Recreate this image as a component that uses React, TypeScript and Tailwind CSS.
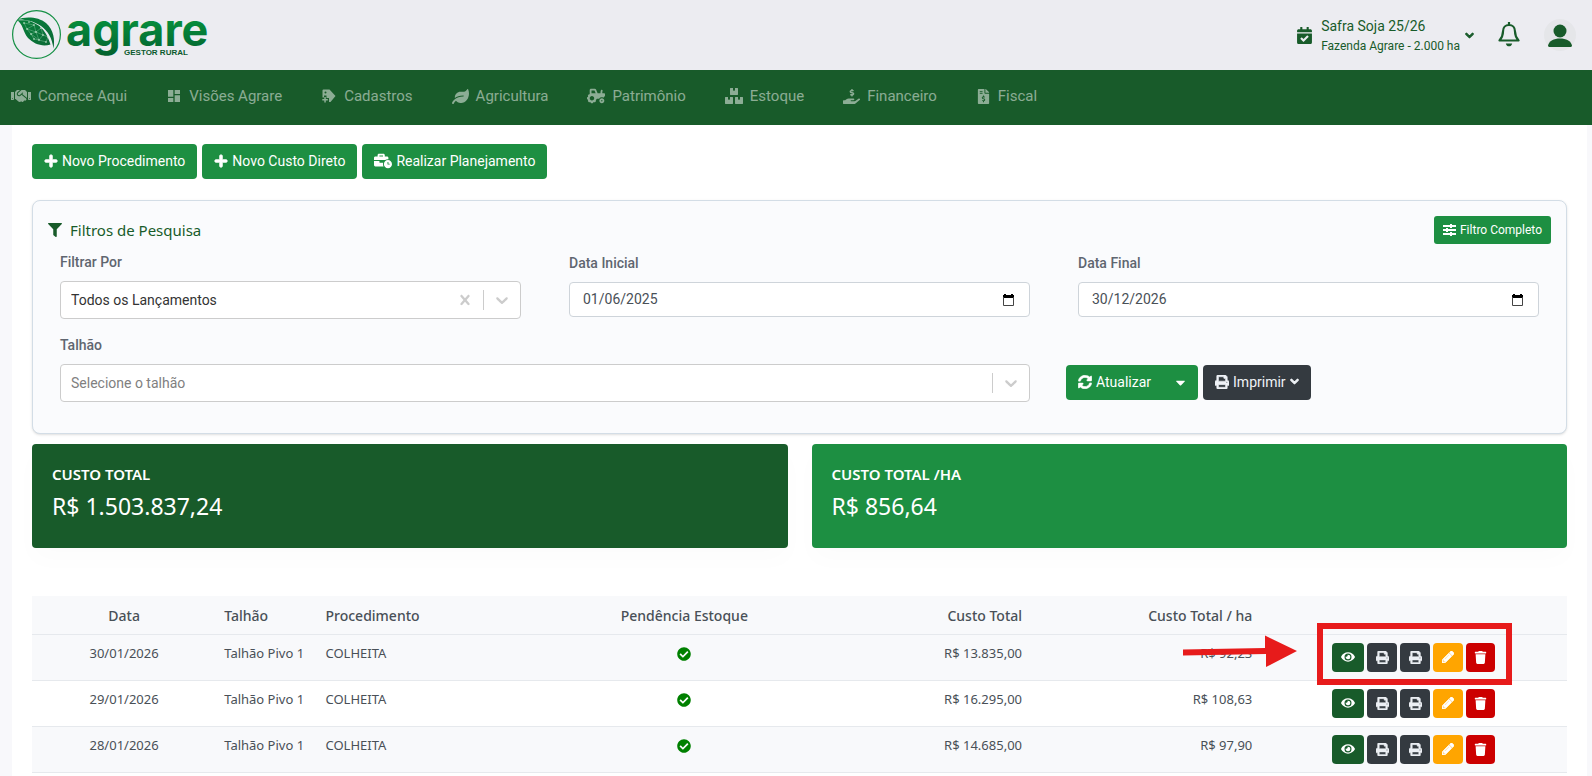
import React from "react";
import {
  FaHandshake, FaLeaf, FaTractor, FaBoxes, FaHandHoldingUsd, FaFileInvoiceDollar, FaPlus, FaBusinessTime,
  FaFilter, FaSyncAlt, FaPrint, FaChevronDown, FaCaretDown, FaCheckCircle, FaEye, FaTrash, FaPencilAlt, FaCalendarCheck,
} from "react-icons/fa";
import { MdDashboard } from "react-icons/md";

function TagPlusIcon() {
  return (
    <svg width="16" height="16" viewBox="0 0 16 16" fill="currentColor" aria-hidden="true">
      <path fillRule="evenodd" d="M1.500 2.500Q1.500 1.500 2.500 1.500H8.500L14.500 8L9.500 14H8V10H5.500V7.500H3V9.500H1.500ZM4.500 3.500a1 1 0 1 0 0 2a1 1 0 1 0 0-2z" />
      <path d="M3.300 9h1.500v2h2v1.500h-2v2H3.300v-2H1.300V11h2z" />
    </svg>
  );
}

const navItems = [
  { label: "Comece Aqui", icon: <FaHandshake size={20} /> },
  { label: "Visões Agrare", icon: <MdDashboard size={16} /> },
  { label: "Cadastros", icon: <TagPlusIcon /> },
  { label: "Agricultura", icon: <FaLeaf size={17} /> },
  { label: "Patrimônio", icon: <FaTractor size={18} /> },
  { label: "Estoque", icon: <FaBoxes size={18} /> },
  { label: "Financeiro", icon: <FaHandHoldingUsd size={17} /> },
  { label: "Fiscal", icon: <FaFileInvoiceDollar size={15} /> },
];

const rows = [
  { date: "30/01/2026", field: "Talhão Pivo 1", proc: "COLHEITA", total: "R$ 13.835,00", perHa: "R$ 92,23" },
  { date: "29/01/2026", field: "Talhão Pivo 1", proc: "COLHEITA", total: "R$ 16.295,00", perHa: "R$ 108,63" },
  { date: "28/01/2026", field: "Talhão Pivo 1", proc: "COLHEITA", total: "R$ 14.685,00", perHa: "R$ 97,90" },
];

const leafNodes = [[12, 19], [17, 18], [15, 25], [22, 21], [19, 30], [24, 28], [29, 24], [27, 36], [31, 31], [36, 33], [34, 38], [22, 35]];

function Logo() {
  return (
    <svg width="204" height="62" viewBox="0 0 204 62" className="overflow-visible" role="img" aria-label="agrare gestor rural">
      <defs>
        <linearGradient id="brand" x1="0" y1="0" x2="0" y2="1">
          <stop offset="0.2" stopColor="#07963f" />
          <stop offset="1" stopColor="#03602e" />
        </linearGradient>
        <linearGradient id="leaf" x1="0" y1="0" x2="1" y2="1">
          <stop offset="0" stopColor="#07803a" />
          <stop offset="1" stopColor="#0c6a37" />
        </linearGradient>
      </defs>
      <circle cx="24.500" cy="30.500" r="23.900" fill="none" stroke="#159045" strokeWidth="1.200" />
      <path d="M5 16C9 17 13 15 20 18C30 22 35 29 38.500 40.500C30 43 22 40 16 34C11 28 11 20 5 16Z" fill="url(#leaf)" />
      <path d="M5 15.500C14 12 27 13 34 19C42 26 43 36 41.500 44.500C40 34 36 27 29 22C22 17 13 15 5 15.500Z" fill="url(#leaf)" />
      <path d="M12 19L22 21L15 25L24 28L29 24L31 31L24 28L19 30L27 36L31 31L36 33L34 38L27 36L22 35L19 30L15 25L12 19M22 21L24 28L27 36" fill="none" stroke="#8fcfa6" strokeWidth="0.400" />
      {leafNodes.map(([x, y]) => <circle key={x + "-" + y} cx={x} cy={y} r="0.800" fill="#d6f0de" />)}
      <text x="54" y="42" fontSize="45" fontWeight="700" className="font-['Inter',sans-serif]" fill="url(#brand)">agrare</text>
      <text x="112" y="51" fontSize="8" fontWeight="700" className="font-['Liberation_Sans',sans-serif]" fill="#0b5a2e">GESTOR RURAL</text>
    </svg>
  );
}

function SelectChevron() {
  return (
    <svg width="20" height="20" viewBox="0 0 20 20" fill="currentColor" aria-hidden="true">
      <path d="M4.516 7.548c0.436-0.446 1.043-0.481 1.576 0l3.908 3.747 3.908-3.747c0.533-0.481 1.141-0.446 1.574 0 0.436 0.445 0.408 1.197 0 1.615-0.406 0.418-4.695 4.502-4.695 4.502-0.217 0.223-0.502 0.335-0.787 0.335s-0.570-0.112-0.789-0.335c0 0-4.287-4.084-4.695-4.502s-0.436-1.170 0-1.615z" />
    </svg>
  );
}

function SelectClear() {
  return (
    <svg width="20" height="20" viewBox="0 0 20 20" fill="currentColor" aria-hidden="true">
      <path d="M14.348 14.849c-0.469 0.469-1.229 0.469-1.697 0l-2.651-3.030-2.651 3.029c-0.469 0.469-1.229 0.469-1.697 0-0.469-0.469-0.469-1.229 0-1.697l2.758-3.150-2.759-3.152c-0.469-0.469-0.469-1.228 0-1.697s1.228-0.469 1.697 0l2.652 3.031 2.651-3.031c0.469-0.469 1.228-0.469 1.697 0s0.469 1.229 0 1.697l-2.758 3.152 2.758 3.150c0.469 0.469 0.469 1.229 0 1.698z" />
    </svg>
  );
}

function SelectField(props: { id: string; label: string; value: string; clearable?: boolean; muted?: boolean }) {
  return (
    <div>
      <label htmlFor={props.id} className="block text-sm leading-5 font-medium text-[#5f6670]">{props.label}</label>
      <div className="mt-[9px] flex h-[38px] items-center rounded border border-[#cccccc] bg-white text-[#cccccc]">
        <select
          id={props.id}
          className={props.muted
            ? "h-full min-w-0 flex-1 appearance-none bg-transparent px-2.5 text-sm text-[#808080] outline-none"
            : "h-full min-w-0 flex-1 appearance-none bg-transparent px-2.5 text-sm text-[#333333] outline-none"}
        >
          <option>{props.value}</option>
        </select>
        {props.clearable && <button type="button" aria-label="Limpar" className="p-2"><SelectClear /></button>}
        <span className="h-5 w-px bg-[#cccccc]" />
        <span className="p-2"><SelectChevron /></span>
      </div>
    </div>
  );
}

function DateField(props: { id: string; label: string; value: string }) {
  return (
    <div className="pt-px">
      <label htmlFor={props.id} className="block text-sm leading-5 font-medium text-[#5f6670]">{props.label}</label>
      <div className="mt-[9px] flex h-[35px] items-center rounded border border-[#ced4da] bg-white pr-3.5">
        <input id={props.id} defaultValue={props.value} className="h-full min-w-0 flex-1 bg-transparent px-[13px] pb-0.5 text-sm text-[#495057] tabular-nums outline-none" />
        <button type="button" aria-label="Abrir calendário" className="text-black">
          <svg width="13" height="14" viewBox="0 0 13 14" aria-hidden="true">
            <path d="M1 2h1V1h2v1h5V1h2v1h1v3H1z" fill="currentColor" />
            <path d="M1.500 4v8.500h10V4" fill="none" stroke="#444444" />
          </svg>
        </button>
      </div>
    </div>
  );
}

const greenButton = "flex h-[35px] items-center gap-1 rounded bg-[#1d8f42] px-3 pb-0.5 text-sm text-white";
const darkAction = "flex h-[29px] w-[30px] items-center justify-center rounded bg-[#343a40] text-[#eceff4]";

export default function App() {
  return (
    <div className="flex h-screen flex-col overflow-hidden bg-[#f8f8fb] font-['Roboto',sans-serif] text-[#495057]">
      <header className="flex h-[70px] shrink-0 items-center justify-between bg-[#ececf1] pr-4 pl-3 text-[#185b2a]">
        <a href="#inicio" aria-label="Agrare"><Logo /></a>
        <div className="flex items-center">
          <button type="button" className="flex items-center text-left">
            <FaCalendarCheck size={17} />
            <span className="ml-2 flex flex-col pt-0.5">
              <span className="text-sm leading-[19px]">Safra Soja 25/26</span>
              <span className="text-xs leading-5">Fazenda Agrare - 2.000 ha</span>
            </span>
            <FaChevronDown size={9} strokeWidth={60} className="ml-[5px]" />
          </button>
          <button type="button" aria-label="Notificações" className="ml-6">
            <svg width="22" height="26" viewBox="0 0 22 26" fill="none" stroke="currentColor" strokeWidth="2.200" aria-hidden="true">
              <path d="M11 0v3M1.500 18.500c2.500-3 3.500-5 3.500-9C5 5.500 7.500 3 11 3s6 2.500 6 6.500c0 4 1 6 3.500 9z" strokeLinejoin="round" />
              <path d="M7.800 21.500h6.400c-.5 2-1.700 2.800-3.200 2.800s-2.700-.8-3.200-2.800z" fill="currentColor" stroke="none" />
            </svg>
          </button>
          <button type="button" aria-label="Perfil" className="ml-6 flex size-8 items-center justify-center rounded-full bg-[#e5e6e9]">
            <svg width="24" height="24" viewBox="0 0 24 24" fill="currentColor" aria-hidden="true">
              <circle cx="12" cy="8" r="6.500" />
              <path d="M0 22.500C1 18 6 15.500 12 15.500S23 18 24 22.500c0 1-1 1.500-2 1.500H2c-1 0-2-.5-2-1.500z" />
            </svg>
          </button>
        </div>
      </header>

      <nav className="flex h-[55px] shrink-0 items-center gap-[39px] bg-[#185b2a] pb-[3px] pl-[11px] text-[15px] text-white/50">
        {navItems.map((item) => (
          <a key={item.label} href="#menu" className="flex items-center gap-[7px]">
            {item.icon}
            <span>{item.label}</span>
          </a>
        ))}
      </nav>

      <main className="mr-[5px] ml-3 flex-1 bg-white px-5 pt-[19px]">
        <div className="flex gap-[5px]">
          <button type="button" className={greenButton}><FaPlus size={14} strokeWidth={30} />Novo Procedimento</button>
          <button type="button" className={greenButton}><FaPlus size={14} strokeWidth={30} />Novo Custo Direto</button>
          <button type="button" className={greenButton}><FaBusinessTime size={18} />Realizar Planejamento</button>
        </div>

        <section className="mt-[21px] h-[234px] rounded-lg border border-[#d3dde6] bg-[#fafbfd] px-[15px] pt-[15px] shadow-sm">
          <div className="flex h-7 items-center justify-between">
            <h2 className="flex items-center gap-2 font-['Noto_Sans',sans-serif] text-[15px] text-[#185b2a]">
              <FaFilter size={14} />Filtros de Pesquisa
            </h2>
            <button type="button" className="flex h-7 items-center gap-1 rounded-[3px] bg-[#1d8f42] px-[9px] text-xs text-white">
              <svg width="13" height="12" viewBox="0 0 13 12" fill="none" stroke="currentColor" strokeWidth="2" aria-hidden="true">
                <path d="M0 2h13M0 6h13M0 10h13" /><path d="M8 0v4M4 4v4M8 8v4" />
              </svg>
              Filtro Completo
            </button>
          </div>
          <div className="mt-2 grid grid-cols-3 gap-x-12 gap-y-4 px-3">
            <SelectField id="tipo" label="Filtrar Por" value="Todos os Lançamentos" clearable />
            <DateField id="inicio" label="Data Inicial" value="01/06/2025" />
            <DateField id="fim" label="Data Final" value="30/12/2026" />
            <div className="col-span-2"><SelectField id="talhao" label="Talhão" value="Selecione o talhão" muted /></div>
            <div className="-ml-3 flex items-end gap-[5px] pb-0.5">
              <div className="flex">
                <button type="button" className="flex h-[35px] items-center gap-1 rounded-l bg-[#1d8f42] px-3 pb-0.5 text-sm text-white"><FaSyncAlt size={14} strokeWidth={20} />Atualizar</button>
                <button type="button" aria-label="Mais opções" className="flex h-[35px] items-center rounded-r bg-[#1d8f42] px-2.5 text-white"><FaCaretDown size={15} /></button>
              </div>
              <button type="button" className="flex h-[35px] items-center gap-1 rounded bg-[#343a40] px-3 pb-0.5 text-sm text-[#eff2f7]"><FaPrint size={14} strokeWidth={20} />Imprimir<FaChevronDown size={9} strokeWidth={60} /></button>
            </div>
          </div>
        </section>

        <section className="mt-2.5 grid grid-cols-2 gap-6 font-['Noto_Sans',sans-serif] text-white">
          <div className="h-[104px] rounded bg-[#185b2a] px-5 pt-5 shadow-[0_12px_24px_rgba(18,38,63,0.015)]">
            <h3 className="text-[15px] leading-5 font-semibold">CUSTO TOTAL</h3>
            <p className="mt-2 text-[23px] leading-7">R$ 1.503.837,24</p>
          </div>
          <div className="h-[104px] rounded bg-[#1d8f42] px-5 pt-5 shadow-[0_12px_24px_rgba(18,38,63,0.015)]">
            <h3 className="text-[15px] leading-5 font-semibold">CUSTO TOTAL /HA</h3>
            <p className="mt-2 text-[23px] leading-7">R$ 856,64</p>
          </div>
        </section>

        <div className="relative mt-12">
          <table className="w-full table-fixed border-collapse font-['Noto_Sans',sans-serif] text-[13px]">
            <colgroup>
              <col className="w-[12%]" /><col className="w-[6.600%]" /><col className="w-[17%]" /><col className="w-[13.800%]" /><col className="w-[15.100%]" /><col className="w-[15%]" /><col />
            </colgroup>
            <thead>
              <tr className="h-[38px] border-b border-[#e6e9ed] bg-[#f8f9fb] text-sm">
                <th className="pt-0.5 font-medium">Data</th>
                <th className="pt-0.5 pl-2 text-left font-medium">Talhão</th>
                <th className="pt-0.5 pl-2 text-left font-medium">Procedimento</th>
                <th className="pt-0.5 font-medium">Pendência Estoque</th>
                <th className="pt-0.5 text-right font-medium">Custo Total</th>
                <th className="pt-0.5 text-right font-medium">Custo Total / ha</th>
                <th aria-label="Ações" />
              </tr>
            </thead>
            <tbody>
              {rows.map((row) => (
                <tr key={row.date} className="h-[46px] border-b border-[#e6e9ed] odd:bg-[#f8f9fb]">
                  <td className="pb-1.5 text-center">{row.date}</td>
                  <td className="pb-1.5 pl-2 whitespace-nowrap">{row.field}</td>
                  <td className="pb-1.5 pl-2">{row.proc}</td>
                  <td className="pb-1.5"><FaCheckCircle size={14} className="mx-auto text-[#008000]" /></td>
                  <td className="pb-1.5 text-right">{row.total}</td>
                  <td className="pb-1.5 text-right">{row.perHa}</td>
                  <td>
                    <div className="flex gap-[3px] pl-20">
                      <button type="button" aria-label="Visualizar" className="flex h-[29px] w-8 items-center justify-center rounded bg-[#185b2a] text-white"><FaEye size={14} /></button>
                      <button type="button" aria-label="Imprimir" className={darkAction}><FaPrint size={13} strokeWidth={20} /></button>
                      <button type="button" aria-label="Imprimir detalhes" className={darkAction}><FaPrint size={13} strokeWidth={20} /></button>
                      <button type="button" aria-label="Editar" className="flex h-[29px] w-[30px] items-center justify-center rounded bg-[#ffa500] text-white"><FaPencilAlt size={12} strokeWidth={30} /></button>
                      <button type="button" aria-label="Excluir" className="flex h-[29px] w-[29px] items-center justify-center rounded bg-[#cc0000] text-white"><FaTrash size={13} /></button>
                    </div>
                  </td>
                </tr>
              ))}
            </tbody>
          </table>
          <svg className="absolute top-[38px] right-[270px]" width="114" height="34" viewBox="0 0 114 34" fill="#e71b1b" aria-hidden="true">
            <path d="M0 15.500L82 14V1.500L114 17L83 33V20L0 21.500z" />
          </svg>
          <div className="pointer-events-none absolute top-[27px] right-[55px] h-[62px] w-[195px] border-6 border-[#e71b1b]" />
        </div>
      </main>
    </div>
  );
}
